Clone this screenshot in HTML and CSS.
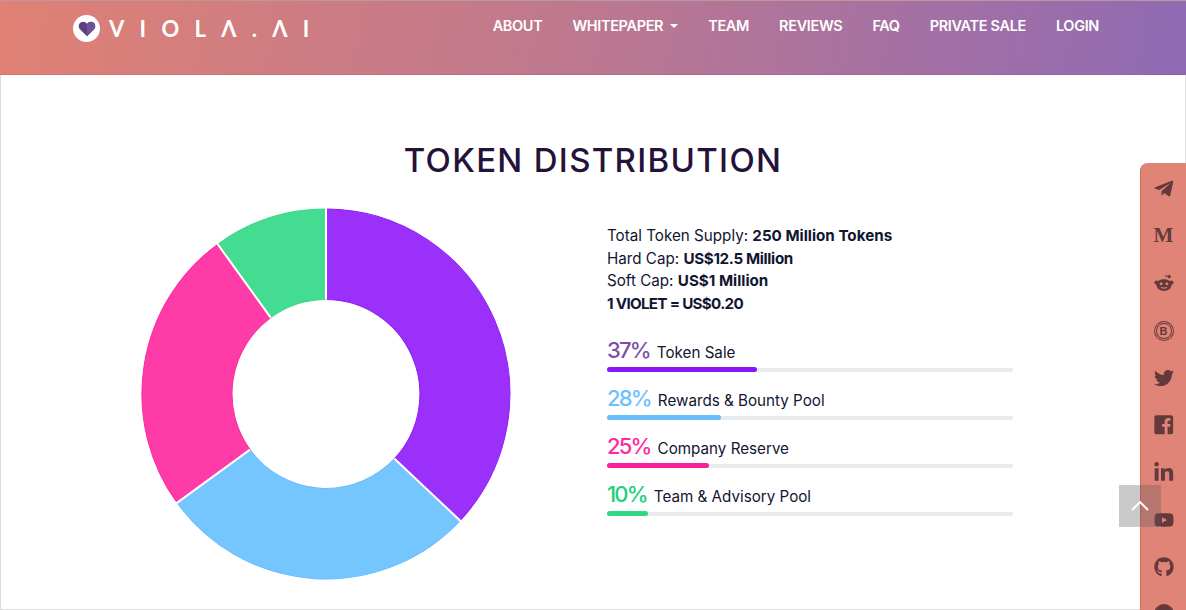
FILE: index.html
```html
<!DOCTYPE html>
<html lang="en">
<head>
    <meta charset="UTF-8">
    <title>Viola.AI Token Distribution</title>
    <link rel="stylesheet" href="styles.css">
</head>
<body>
    <header class="topbar">
        <a class="logo" href="#">
            <span class="logo-badge">
                <svg class="logo-heart" viewBox="0 0 24 22"><path fill="#5a4080" d="M12 21 2.6 11.6C-.4 8.6.3 3.6 3.8 1.8 7 .2 10.300 1.300 12 4c1.700-2.700 5-3.800 8.200-2.200 3.500 1.800 4.200 6.800 1.200 9.800z"/><path fill="#6d5296" d="M12 4c1.700-2.700 5-3.800 8.200-2.200 3.500 1.800 4.200 6.800 1.200 9.800L12 21z"/></svg>
            </span>
            <span class="logo-text">VIOLΛ.ΛI</span>
        </a>
        <nav class="nav">
            <a href="#">ABOUT</a>
            <a href="#" class="has-caret">WHITEPAPER</a>
            <a href="#">TEAM</a>
            <a href="#">REVIEWS</a>
            <a href="#">FAQ</a>
            <a href="#">PRIVATE SALE</a>
            <a href="#">LOGIN</a>
        </nav>
    </header>

    <main class="section">
        <h1 class="section-title">TOKEN DISTRIBUTION</h1>
        <div class="dist">
            <svg class="donut" viewBox="0 0 370 370" preserveAspectRatio="none">
                <path fill="#9b30fb" stroke="#8a1dfa" d="M185 1A184 184 0 0 1 319.100 310.900L253.500 249.300A94 94 0 0 0 185 91Z"/>
                <path fill="#75c6ff" stroke="#68bdfd" d="M319.100 310.900A184 184 0 0 1 36.100 293.200L109 240.300A94 94 0 0 0 253.500 249.300Z"/>
                <path fill="#ff3ba8" stroke="#fb2aa0" d="M36.100 293.200A184 184 0 0 1 76.800 36.100L129.700 109A94 94 0 0 0 109 240.300Z"/>
                <path fill="#43dc90" stroke="#3bd688" d="M76.800 36.100A184 184 0 0 1 185 1V91A94 94 0 0 0 129.700 109Z"/>
                <path class="donut-gap" d="M185 0V91M319.800 311.600 253.500 249.300M35.300 293.800 109 240.300M76.200 35.300 129.700 109"/>
            </svg>
            <div class="info">
                <p class="facts">
                    Total Token Supply: <b>250 Million Tokens</b><br>
                    Hard Cap: <b class="tight">US$12.5 Million</b><br>
                    Soft Cap: <b>US$1 Million</b><br>
                    <b class="tighter">1 VIOLET = US$0.20</b>
                </p>
                <div class="stat">
                    <div class="stat-head"><span class="pct pct-sale">37%</span> Token Sale</div>
                    <div class="track"><div class="fill fill-sale" style="width: 37%"></div></div>
                </div>
                <div class="stat">
                    <div class="stat-head"><span class="pct pct-rewards">28%</span> Rewards &amp; Bounty Pool</div>
                    <div class="track"><div class="fill fill-rewards" style="width: 28%"></div></div>
                </div>
                <div class="stat">
                    <div class="stat-head"><span class="pct pct-reserve">25%</span> Company Reserve</div>
                    <div class="track"><div class="fill fill-reserve" style="width: 25%"></div></div>
                </div>
                <div class="stat">
                    <div class="stat-head"><span class="pct pct-team">10%</span> Team &amp; Advisory Pool</div>
                    <div class="track"><div class="fill fill-team" style="width: 10%"></div></div>
                </div>
            </div>
        </div>
    </main>

    <aside class="social">
        <a href="#"><svg class="tall" viewBox="0 0 448 512"><path d="M446.700 98.600l-67.600 318.800c-5.100 22.500-18.400 28.100-37.300 17.500l-103-75.900-49.700 47.800c-5.500 5.500-10.100 10.100-20.700 10.100l7.400-104.900 190.900-172.500c8.300-7.400-1.800-11.500-12.900-4.100L117.800 284 16.200 252.200c-22.100-6.900-22.500-22.100 4.600-32.700L418.200 66.400c18.400-6.900 34.500 4.100 28.500 32.200z"/></svg></a>
        <a href="#" class="medium">M</a>
        <a href="#"><svg viewBox="0 0 24 24"><path d="M13.200 2.600 13 7.500h-2C6.400 7.700 3 10.600 3 14.200 3 18.500 7 21.500 12 21.500s9-3 9-7.300c0-3.600-3.400-6.500-8-6.700l.2-3.500 3.300.7a1.900 1.900 0 1 0 .3-1.400z"/><circle cx="3" cy="11.500" r="2.500"/><circle cx="21" cy="11.500" r="2.500"/><circle class="hole" cx="8.500" cy="13" r="1.700"/><circle class="hole" cx="15.500" cy="13" r="1.700"/><path class="hole-line" d="M8.500 17c2 1.400 5 1.400 7 0"/></svg></a>
        <a href="#" class="btc">B</a>
        <a href="#"><svg viewBox="0 0 512 512"><path d="M459.370 151.716c.325 4.548.325 9.097.325 13.645 0 138.720-105.583 298.558-298.558 298.558-59.452 0-114.680-17.219-161.137-47.106 8.447.974 16.568 1.299 25.340 1.299 49.055 0 94.213-16.568 130.274-44.832-46.132-.975-84.792-31.188-98.112-72.772 6.498.974 12.995 1.624 19.818 1.624 9.421 0 18.843-1.300 27.614-3.573-48.081-9.747-84.143-51.980-84.143-102.985v-1.299c13.969 7.797 30.214 12.670 47.431 13.319-28.264-18.843-46.781-51.005-46.781-87.391 0-19.492 5.197-37.360 14.294-52.954 51.655 63.675 129.300 105.258 216.365 109.807-1.624-7.797-2.599-15.918-2.599-24.040 0-57.828 46.782-104.934 104.934-104.934 30.213 0 57.502 12.670 76.670 33.137 23.715-4.548 46.456-13.320 66.599-25.340-7.798 24.366-24.366 44.833-46.132 57.827 21.117-2.273 41.584-8.122 60.426-16.243-14.292 20.791-32.161 39.308-52.628 54.253z"/></svg></a>
        <a href="#"><svg class="tall" viewBox="0 0 448 512"><path d="M448 80v352c0 26.500-21.500 48-48 48h-85.300V302.800h60.600l8.700-67.600h-69.300V192c0-19.600 5.400-32.900 33.500-32.900H384V98.700c-6.200-.8-27.400-2.700-52.200-2.700-51.600 0-87 31.500-87 89.400v49.900H184v67.600h60.900V480H48c-26.500 0-48-21.500-48-48V80c0-26.500 21.500-48 48-48h352c26.500 0 48 21.500 48 48z"/></svg></a>
        <a href="#"><svg class="tall" viewBox="0 0 448 512"><path d="M100.280 448H7.400V148.900h92.880zM53.790 108.100C24.090 108.100 0 83.500 0 53.800a53.790 53.790 0 0 1 107.580 0c0 29.700-24.100 54.300-53.790 54.300zM447.900 448h-92.680V302.400c0-34.700-.7-79.200-48.290-79.200-48.290 0-55.690 37.700-55.690 76.700V448h-92.780V148.900h89.080v40.800h1.300c12.400-23.500 42.690-48.300 87.880-48.300 94 0 111.280 61.900 111.280 142.300V448z"/></svg></a>
        <a href="#"><svg viewBox="0 0 576 512"><path d="M549.655 124.083c-6.281-23.650-24.787-42.276-48.284-48.597C458.781 64 288 64 288 64S117.220 64 74.629 75.486c-23.497 6.322-42.003 24.947-48.284 48.597-11.412 42.867-11.412 132.305-11.412 132.305s0 89.438 11.412 132.305c6.281 23.650 24.787 41.500 48.284 47.821C117.220 448 288 448 288 448s170.780 0 213.371-11.486c23.497-6.321 42.003-24.171 48.284-47.821 11.412-42.867 11.412-132.305 11.412-132.305s0-89.438-11.412-132.305zm-317.510 213.508V175.185l142.739 81.205-142.739 81.201z"/></svg></a>
        <a href="#"><svg viewBox="0 0 496 512"><path d="M244.800 8C106.100 8 0 113.300 0 252c0 110.900 69.800 205.800 169.500 239.200 12.800 2.300 17.300-5.600 17.300-12.100 0-6.200-.3-40.400-.3-61.400 0 0-70 15-84.700-29.800 0 0-11.400-29.100-27.800-36.600 0 0-22.900-15.700 1.600-15.400 0 0 24.900 2 38.600 25.800 21.900 38.600 58.600 27.500 72.900 20.900 2.300-16 8.800-27.100 16-33.700-55.900-6.200-112.300-14.300-112.300-110.500 0-27.500 7.600-41.300 23.600-58.900-2.600-6.500-11.100-33.300 2.600-67.900 20.900-6.500 69 27 69 27 20-5.600 41.500-8.500 62.800-8.500s42.800 2.900 62.800 8.500c0 0 48.100-33.600 69-27 13.700 34.700 5.200 61.400 2.600 67.900 16 17.700 25.800 31.500 25.800 58.900 0 96.500-58.900 104.200-114.800 110.500 9.200 7.900 17 22.900 17 46.400 0 33.700-.3 75.400-.3 83.600 0 6.500 4.600 14.400 17.300 12.100C428.200 457.800 496 362.900 496 252 496 113.300 383.500 8 244.800 8z"/></svg></a>
        <a href="#"><span class="dot"></span></a>
    </aside>

    <a class="to-top" href="#"><svg viewBox="0 0 18 10"><path d="M1 9l8-8 8 8"/></svg></a>
</body>
</html>
```

FILE: styles.css
```css
html, body {
    margin: 0;
    height: 100%;
    overflow: hidden;
}

body {
    position: relative;
    background: #fff;
    color: #1b1733;
    font-family: Inter, "Noto Sans", sans-serif;
}

a {
    color: inherit;
    text-decoration: none;
}

/* top bar */
.topbar {
    height: 75px;
    box-sizing: border-box;
    display: flex;
    justify-content: space-between;
    padding: 0 87px 0 73px;
    background: linear-gradient(100deg, #e08174 0%, #bc7890 50%, #8f6ab4 100%);
    border-top: 1px solid #b89a9a;
    box-shadow: inset 0 -1px 0 rgba(150, 40, 90, .15);
}

.logo {
    display: flex;
    align-items: center;
    height: 55px;
    color: #fff;
}

.logo-badge {
    width: 27px;
    height: 27px;
    border-radius: 50%;
    background: #fff;
    display: flex;
    align-items: center;
    justify-content: center;
}

.logo-heart {
    width: 18px;
    height: 16px;
}

.logo-text {
    margin-left: 9px;
    font-family: Lato, sans-serif;
    font-size: 22px;
    font-weight: 700;
    letter-spacing: 15.300px;
}

.nav {
    display: flex;
    gap: 30px;
    height: 49px;
    align-items: center;
    color: #fff;
    font-size: 14.500px;
    font-weight: 600;
    letter-spacing: -.35px;
}

.has-caret::after {
    content: "";
    display: inline-block;
    margin-left: 7px;
    vertical-align: 3px;
    border-top: 4px solid #fff;
    border-left: 4px solid transparent;
    border-right: 4px solid transparent;
}

/* token section */
.section {
    height: 535px;
    box-sizing: border-box;
    border: 1px solid #ddd;
    border-top: 0;
}

.section-title {
    margin: 0;
    padding-top: 64px;
    text-align: center;
    font-size: 33px;
    line-height: 42px;
    font-weight: 500;
    letter-spacing: 1.300px;
    color: #241238;
}

.dist {
    display: flex;
    padding: 27px 0 0 140px;
}

.donut {
    width: 370px;
    height: 372px;
    flex: none;
}

.donut-gap {
    fill: none;
    stroke: #fff;
    stroke-width: 2;
}

.info {
    width: 406px;
    margin-left: 96px;
    padding-top: 17px;
}

.facts {
    margin: 0 0 17px;
    font-size: 15.200px;
    line-height: 22.700px;
    color: #111631;
}

.facts b {
    font-weight: 700;
}

.facts .tight {
    letter-spacing: -.35px;
}

.facts .tighter {
    letter-spacing: -.7px;
}

.stat {
    margin-bottom: 9px;
}

.stat-head {
    display: flex;
    align-items: baseline;
    gap: 7px;
    height: 35px;
    font-size: 15.200px;
    line-height: 35px;
    color: #111631;
}

.pct {
    font-size: 22px;
    font-weight: 500;
    letter-spacing: -1.800px;
}

.pct-sale { color: #7d4fa8; }
.pct-rewards { color: #6cc0fc; }
.pct-reserve { color: #ff2a9d; }
.pct-team { color: #21d07a; }

.track {
    display: flex;
    align-items: flex-start;
    height: 4px;
    border-radius: 3px;
    background: #e9ecef;
}

.fill {
    height: 5px;
    margin-top: -.5px;
    border-radius: 3px;
}

.fill-sale { background: #8a14fa; }
.fill-rewards { background: #69bdfd; }
.fill-reserve { background: #fb1f98; }
.fill-team { background: #2fd884; }

/* social strip, fixed over the page */
.social {
    position: absolute;
    top: 163px;
    right: 0;
    width: 46px;
    box-sizing: border-box;
    padding-top: 2px;
    display: flex;
    flex-direction: column;
    background: #e08478;
    border-left: 1px solid #d9665a;
    border-top-left-radius: 8px;
}

.social a {
    height: 47.300px;
    flex: none;
    display: flex;
    align-items: center;
    justify-content: center;
    color: #63393a;
}

.social svg {
    width: 20px;
    height: 20px;
    fill: #63393a;
}

.social svg.tall {
    width: 21.500px;
    height: 21.500px;
}

.social .hole {
    fill: #e08478;
}

.social .hole-line {
    fill: none;
    stroke: #e08478;
    stroke-width: 1.500;
}

.social .medium {
    font-family: "Liberation Serif", serif;
    font-size: 21px;
    font-weight: 700;
}

.social .btc {
    font-family: "Liberation Sans", sans-serif;
    font-size: 11px;
    font-weight: 700;
}

.social .btc::before {
    content: "";
    position: absolute;
    width: 14px;
    height: 14px;
    border-radius: 50%;
    border: 1.500px solid #63393a;
    box-shadow: 0 0 0 1px #e08478, 0 0 0 2px #63393a;
}

.social .dot {
    width: 20px;
    height: 20px;
    border-radius: 50%;
    background: #63393a;
}

.to-top {
    position: absolute;
    left: 1119px;
    top: 485px;
    width: 42px;
    height: 42px;
    display: flex;
    align-items: center;
    justify-content: center;
    background: rgba(90, 90, 90, .32);
}

.to-top svg {
    width: 18px;
    height: 10px;
    fill: none;
    stroke: #fff;
    stroke-width: 2;
}
```
